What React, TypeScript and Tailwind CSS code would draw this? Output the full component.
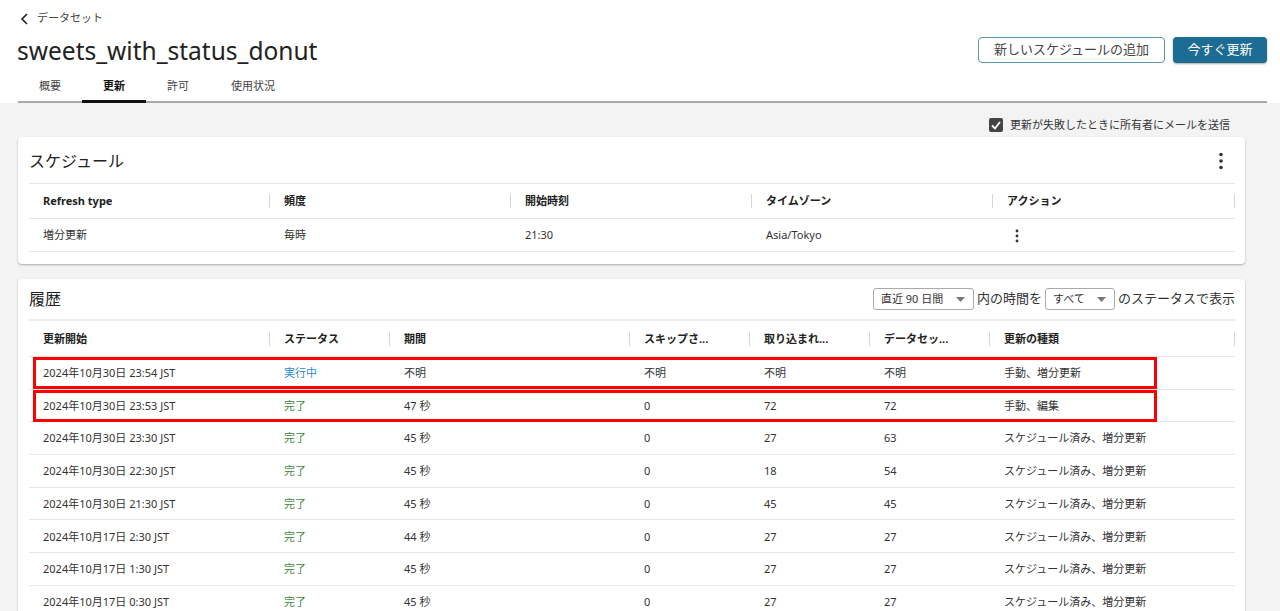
import React from "react";

const FONT = { fontFamily: '"Noto Sans", "Noto Sans CJK JP", sans-serif' };

function Kebab({ big }: { big?: boolean }) {
  const r = big ? 1.8 : 1.4;
  const gap = big ? 6.5 : 5;
  return (
    <svg width="6" height={big ? 20 : 14} viewBox={`0 0 6 ${big ? 20 : 14}`}>
      <circle cx="3" cy={big ? 3.5 : 2} r={r} fill="#333" />
      <circle cx="3" cy={big ? 3.5 + gap : 2 + gap} r={r} fill="#333" />
      <circle cx="3" cy={big ? 3.5 + 2 * gap : 2 + 2 * gap} r={r} fill="#333" />
    </svg>
  );
}

function HeadCell({ children }: { children: React.ReactNode }) {
  return (
    <div className="relative flex items-center pl-[14px] pt-[1px] font-bold text-[11px] text-[#222]">
      <span className="truncate">{children}</span>
      <span className="absolute right-0 top-1/2 -translate-y-1/2 h-[14px] w-px bg-[#d5d5d5]" />
    </div>
  );
}

function Cell({ children, className = "" }: { children: React.ReactNode; className?: string }) {
  return <div className={`flex items-center pl-[14px] pt-[1px] text-[11px] text-[#333] ${className}`}>{children}</div>;
}

function Select({ label, w }: { label: string; w: string }) {
  return (
    <div className={`${w} h-[22px] border border-[#aaa] rounded-[3px] bg-white flex items-center justify-between pl-[7px] pr-[8px] text-[11px] text-[#333]`}>
      <span>{label}</span>
      <svg width="9" height="5" viewBox="0 0 9 5">
        <path d="M0 0 L9 0 L4.5 5 Z" fill="#777" />
      </svg>
    </div>
  );
}

const history = [
  ["2024年10月30日 23:54 JST", "実行中", "不明", "不明", "不明", "不明", "手動、増分更新"],
  ["2024年10月30日 23:53 JST", "完了", "47 秒", "0", "72", "72", "手動、編集"],
  ["2024年10月30日 23:30 JST", "完了", "45 秒", "0", "27", "63", "スケジュール済み、増分更新"],
  ["2024年10月30日 22:30 JST", "完了", "45 秒", "0", "18", "54", "スケジュール済み、増分更新"],
  ["2024年10月30日 21:30 JST", "完了", "45 秒", "0", "45", "45", "スケジュール済み、増分更新"],
  ["2024年10月17日 2:30 JST", "完了", "44 秒", "0", "27", "27", "スケジュール済み、増分更新"],
  ["2024年10月17日 1:30 JST", "完了", "45 秒", "0", "27", "27", "スケジュール済み、増分更新"],
  ["2024年10月17日 0:30 JST", "完了", "45 秒", "0", "27", "27", "スケジュール済み、増分更新"],
];

const HCOLS = "grid grid-cols-[241px_120px_240px_120px_120px_120px_1fr]";
const SCOLS = "grid grid-cols-[241px_241px_241px_241px_1fr]";

export default function App() {
  return (
    <div style={FONT} className="w-[1280px] h-[611px] overflow-hidden bg-[#f3f3f3] text-[#333]">
      {/* Header */}
      <div className="bg-white">
        <div className="h-[34px] flex items-center pt-[3px] pl-[20px] gap-[8px]">
          <svg width="9" height="12" viewBox="0 0 9 12">
            <path d="M7 1 L2 6 L7 11" fill="none" stroke="#222" strokeWidth="1.6" />
          </svg>
          <span className="text-[11px] text-[#444]">データセット</span>
        </div>
        <div className="h-[32px] flex items-center justify-between pl-[17px] pr-[13px]">
          <h1 className="text-[24.5px] leading-none text-[#222] font-normal pt-[2px]">sweets_with_status_donut</h1>
          <div className="flex items-center gap-[8px]">
            <button className="h-[26px] w-[187px] border border-[#5d93b5] rounded-[4px] bg-white text-[13px] text-[#444]">
              新しいスケジュールの追加
            </button>
            <button className="h-[26px] w-[94px] rounded-[4px] bg-[#1c6c93] text-[13px] text-white shadow-[0_1px_2px_rgba(0,0,0,0.35)]">
              今すぐ更新
            </button>
          </div>
        </div>
        <div className="pl-[18px] pr-[13px]">
          <div className="flex h-[37px] border-b-2 border-[#a8a8a8]">
            {["概要", "更新", "許可", "使用状況"].map((t) => (
              <div
                key={t}
                className={`relative px-[21px] pt-[12px] text-[11px] ${t === "更新" ? "font-bold text-[#111]" : "text-[#444]"}`}
              >
                {t}
                {t === "更新" && <span className="absolute left-0 right-0 -bottom-[2px] h-[3px] bg-[#111]" />}
              </div>
            ))}
          </div>
        </div>
      </div>

      {/* Content */}
      <div className="pl-[18px] pr-[35px]">
        <div className="flex justify-end items-center gap-[7px] pr-[15px] mt-[15px] h-[14px]">
          <span className="w-[14px] h-[14px] rounded-[2px] bg-[#444] flex items-center justify-center">
            <svg width="10" height="9" viewBox="0 0 10 9">
              <path d="M1 4.5 L4 7.5 L9 1" fill="none" stroke="white" strokeWidth="1.8" />
            </svg>
          </span>
          <span className="text-[11px] text-[#333]">更新が失敗したときに所有者にメールを送信</span>
        </div>

        {/* Schedule card */}
        <div className="mt-[5px] bg-white rounded-[4px] shadow-[0_1px_2px_rgba(0,0,0,0.3)] pl-[11px] pr-[10px] pb-[12px]">
          <div className="h-[47px] flex items-center justify-between pt-[2px] border-b border-[#e6e6e6]">
            <span className="text-[16px] text-[#222]">スケジュール</span>
            <span className="mr-[11px] flex"><Kebab big /></span>
          </div>
          <div className={`${SCOLS} h-[35px] border-b border-[#e6e6e6]`}>
            <HeadCell>Refresh type</HeadCell>
            <HeadCell>頻度</HeadCell>
            <HeadCell>開始時刻</HeadCell>
            <HeadCell>タイムゾーン</HeadCell>
            <HeadCell>アクション</HeadCell>
          </div>
          <div className={`${SCOLS} h-[33px] border-b border-[#e6e6e6]`}>
            <Cell>増分更新</Cell>
            <Cell>毎時</Cell>
            <Cell>21:30</Cell>
            <Cell>Asia/Tokyo</Cell>
            <Cell><span className="pl-[7px] flex"><Kebab /></span></Cell>
          </div>
        </div>

        {/* History card */}
        <div className="mt-[15px] bg-white rounded-[4px] shadow-[0_1px_2px_rgba(0,0,0,0.3)] pl-[11px] pr-[10px] pb-[12px]">
          <div className="h-[42px] flex items-center justify-between border-b-2 border-[#ececec]">
            <span className="text-[16px] text-[#222]">履歴</span>
            <div className="flex items-center gap-[3px] text-[13px] text-[#333]">
              <Select label="直近 90 日間" w="w-[101px]" />
              <span>内の時間を</span>
              <Select label="すべて" w="w-[70px]" />
              <span>のステータスで表示</span>
            </div>
          </div>
          <div className={`${HCOLS} h-[36px] border-b border-[#e6e6e6]`}>
            <HeadCell>更新開始</HeadCell>
            <HeadCell>ステータス</HeadCell>
            <HeadCell>期間</HeadCell>
            <HeadCell>スキップさ...</HeadCell>
            <HeadCell>取り込まれ...</HeadCell>
            <HeadCell>データセッ...</HeadCell>
            <HeadCell>更新の種類</HeadCell>
          </div>
          <div className="relative">
            {history.map((r, i) => (
              <div key={i} className={`${HCOLS} h-[32.7px] border-b border-[#e6e6e6]`}>
                <Cell>{r[0]}</Cell>
                <Cell className={r[1] === "実行中" ? "!text-[#2b8ad0]" : "!text-[#3f8a3f]"}>{r[1]}</Cell>
                <Cell>{r[2]}</Cell>
                <Cell>{r[3]}</Cell>
                <Cell>{r[4]}</Cell>
                <Cell>{r[5]}</Cell>
                <Cell>{r[6]}</Cell>
              </div>
            ))}
            <div className="absolute left-[4px] top-0 w-[1124px] h-[32px] border-[3px] border-[#ff0000]" />
            <div className="absolute left-[4px] top-[33px] w-[1124px] h-[32px] border-[3px] border-[#ff0000]" />
          </div>
        </div>
      </div>
    </div>
  );
}
